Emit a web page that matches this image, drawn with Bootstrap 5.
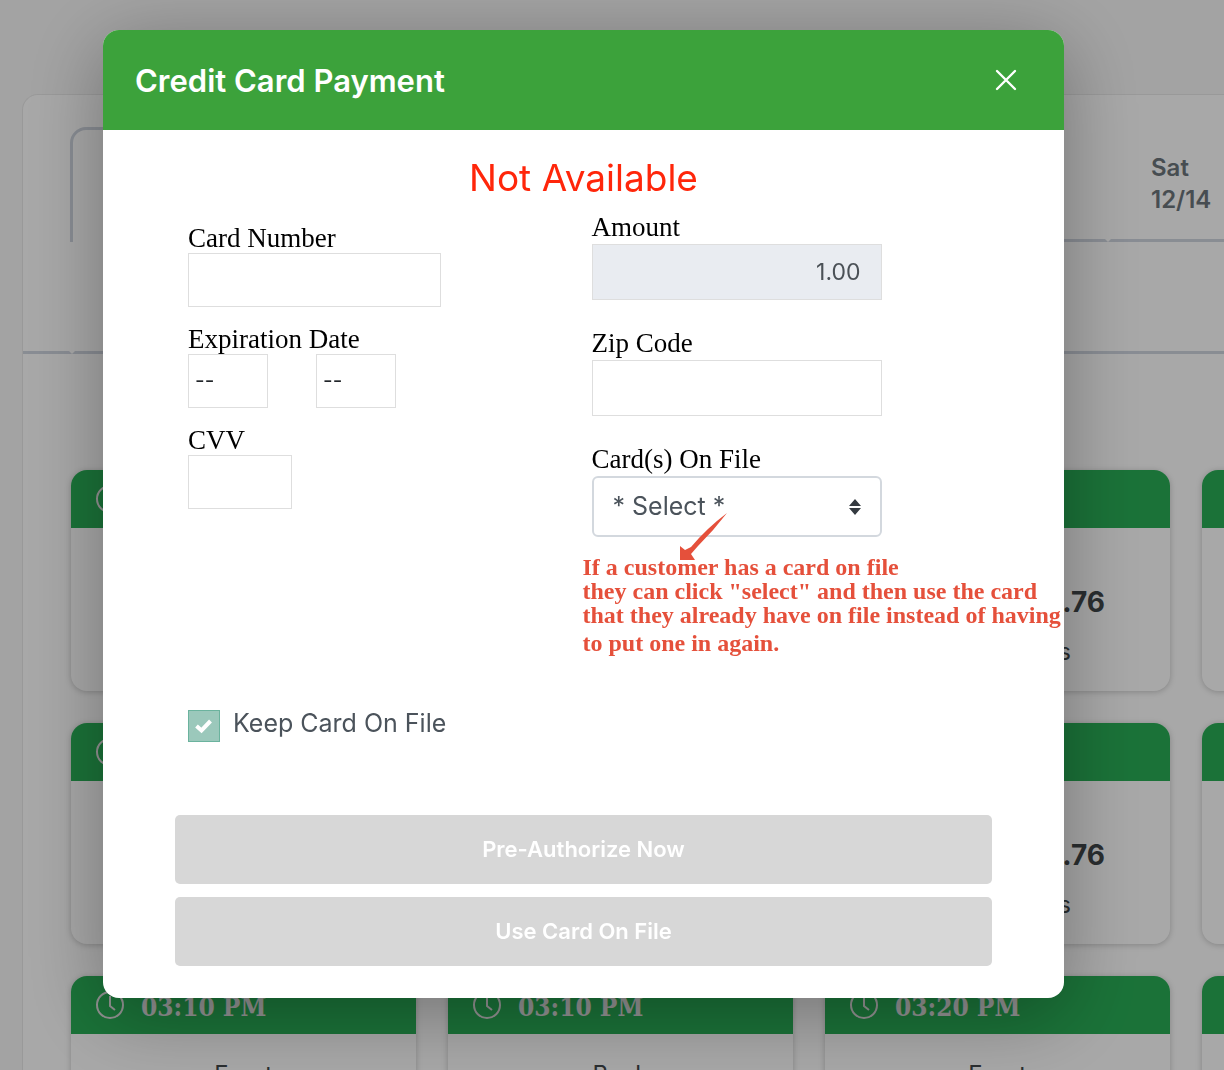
<!DOCTYPE html>
<html lang="en">
<head>
<meta charset="utf-8">
<meta name="viewport" content="width=device-width, initial-scale=1">
<title>Credit Card Payment</title>
<link href="https://cdn.jsdelivr.net/npm/bootstrap@5.3.0/dist/css/bootstrap.min.css" rel="stylesheet">
<style>
  body { background: #f7f7f7; font-family: Inter, sans-serif; color: #404649; overflow: hidden; }

  /* schedule page behind the dialog */
  .schedule { height: 100vh; padding: 94px 0 0 22px; overflow: hidden; }
  .panel { height: 100%; background: #fff; border: 1px solid #e9e9e9; border-width: 1px 0 0 1px; border-top-left-radius: 16px; overflow: hidden; }
  .days { padding: 32px 0 0 47px; height: 147px; }
  .day { flex: 0 0 173px; border: 3px solid transparent; border-bottom-color: #d0d6e0; padding: 22px 40px; font-size: 24px; line-height: 32px; font-weight: 600; color: #6d757c; }
  .day-active { border-color: #d0d6e0 #d0d6e0 transparent #d0d6e0; border-radius: 16px 16px 0 0; border-bottom: 0; }
  .subtabs { height: 112px; }
  .subtab { border: 3px solid transparent; border-bottom-color: #d0d6e0; }
  .subtab-first { flex: 0 0 49px; border-left: 0; }
  .subtab-rest { border-right: 0; }
  .slots { padding: 116px 0 0 48px; gap: 32px; }
  .slot-line { gap: 32px; }
  .slot { flex: 0 0 345px; height: 221px; border-radius: 16px; overflow: hidden; background: #fff; box-shadow: 0 1px 6px rgba(0,0,0,.22); }
  .slot-head { height: 58px; background: #29ae56; color: #e0e0e0; padding: 0 24px; gap: 16px; font: bold 26px/32px "DejaVu Serif Condensed", "DejaVu Serif", serif; }
  .slot-head span { padding-top: 4px; }
  .slot-place { padding-top: 25px; font-size: 24px; line-height: 32px; }
  .price { padding: 56px 65px 0 0; font-size: 28px; line-height: 36px; font-weight: 700; }
  .spots { padding: 16px 99px 0 0; font-size: 24px; line-height: 32px; }

  /* dialog */
  .modal-backdrop.show { opacity: .34; }
  .pay-modal { padding: 30px 160px 0 103px; }
  .pay-modal .modal-dialog { max-width: none; margin: 0; }
  .pay-modal .modal-content { border: 0; border-radius: 16px; box-shadow: 0 16px 80px rgba(0,0,0,.32); overflow: hidden; }
  .pay-head { height: 100px; background: #3ca23b; color: #fff; padding: 2px 46px 0 32px; }
  .pay-title { font-size: 31px; line-height: 40px; font-weight: 600; }
  .pay-body { padding: 24px 72px 32px; }
  .alert-line { font-size: 37px; line-height: 48px; color: #ff260a; }
  .fields-left { padding: 21px 0 0 13px; }
  .fields-right { padding: 9px 0 0 8px; }
  .fields-left label, .fields-right label { display: block; font: 27px/30px "Liberation Serif", serif; color: #000; }
  .fields-right label { line-height: 33px; }
  .fields-left .form-control, .fields-left .form-select { height: 54px; border: 1px solid #dedede; border-radius: 0; padding: 0 6px; margin-bottom: 17px; font-size: 21px; color: #212529; background-image: none; }
  .w-number { width: 253px; }
  .fields-left .w-exp { width: 80px; }
  .fields-left .w-cvv { width: 104px; }
  .exp-pair { gap: 48px; }
  .fields-right .form-control { width: 290px; height: 56px; border: 1px solid #dedede; border-radius: 0; padding: 0 20px; margin-bottom: 27px; font-size: 23px; color: #4b5157; }
  .fields-right .form-control:disabled { background: #e9ecf1; }
  .fields-right .form-select { width: 290px; height: 61px; border: 2px solid #d3d8de; border-radius: 6px; padding: 0 19px; font-size: 25px; color: #4b535b;
    background-image: url("data:image/svg+xml,%3Csvg xmlns='http://www.w3.org/2000/svg' viewBox='0 0 12 16'%3E%3Cpath fill='%23343a40' d='M0 7 6 0l6 7zM0 9h12l-6 7z'/%3E%3C/svg%3E"); background-size: 12px 16px; background-position: right 19px center; }
  .note { margin: 18px 0 0 -9px; font: bold 24px/24px "Liberation Serif", serif; color: #e5503b; }
  .note-arrow { left: 97px; top: -42px; }
  .keep { padding: 50px 0 0 13px; gap: 13px; }
  .keep .form-check-input { flex: none; width: 32px; height: 32px; margin: 5px 0 0; border: 1px solid #6bb39e; border-radius: 0; background-color: #9bc8bb; opacity: 1;
    background-image: url("data:image/svg+xml,%3Csvg xmlns='http://www.w3.org/2000/svg' viewBox='0 0 28 28'%3E%3Cpath fill='none' stroke='%23fff' stroke-width='4' d='M6.500 14 11.500 18.500 20.500 9'/%3E%3C/svg%3E"); background-size: 28px 28px; }
  .keep .form-check-label { font-size: 25px; line-height: 36px; color: #4b535b; }
  .actions { padding-top: 73px; gap: 13px; }
  .actions .btn { height: 69px; border: 0; border-radius: 5px; background: #d7d7d7; color: #fff; opacity: 1; font-size: 22px; font-weight: 600; }
</style>
<script src="https://cdn.jsdelivr.net/npm/bootstrap@5.3.0/dist/js/bootstrap.bundle.min.js"></script>
</head>
<body>
<svg class="d-none" xmlns="http://www.w3.org/2000/svg">
  <symbol id="clock" viewBox="0 0 30 30"><g fill="none" stroke="currentColor" stroke-width="2"><circle cx="15" cy="15" r="13"/><path d="M15 6v10l5 4"/></g></symbol>
</svg>

<main class="schedule">
  <div class="panel">
    <div class="days d-flex">
      <div class="day day-active"></div>
      <div class="day"></div>
      <div class="day"></div>
      <div class="day"></div>
      <div class="day"></div>
      <div class="day"></div>
      <div class="day">Sat 12/14</div>
    </div>
    <div class="subtabs d-flex">
      <div class="subtab subtab-first"></div>
      <div class="subtab subtab-rest flex-grow-1"></div>
    </div>
    <div class="slots d-flex flex-column">
      <div class="slot-line d-flex">
        <div class="slot"><div class="slot-head d-flex align-items-center"><svg width="30" height="30"><use href="#clock"/></svg></div></div>
        <div class="slot"><div class="slot-head"></div></div>
        <div class="slot"><div class="slot-head"></div><div class="price text-end">.76</div><div class="spots text-end">s</div></div>
        <div class="slot"><div class="slot-head"></div></div>
      </div>
      <div class="slot-line d-flex">
        <div class="slot"><div class="slot-head d-flex align-items-center"><svg width="30" height="30"><use href="#clock"/></svg></div></div>
        <div class="slot"><div class="slot-head"></div></div>
        <div class="slot"><div class="slot-head"></div><div class="price text-end">.76</div><div class="spots text-end">s</div></div>
        <div class="slot"><div class="slot-head"></div></div>
      </div>
      <div class="slot-line d-flex">
        <div class="slot"><div class="slot-head d-flex align-items-center"><svg width="30" height="30"><use href="#clock"/></svg><span>03:10 PM</span></div><div class="slot-place text-center">Front</div></div>
        <div class="slot"><div class="slot-head d-flex align-items-center"><svg width="30" height="30"><use href="#clock"/></svg><span>03:10 PM</span></div><div class="slot-place text-center">Back</div></div>
        <div class="slot"><div class="slot-head d-flex align-items-center"><svg width="30" height="30"><use href="#clock"/></svg><span>03:20 PM</span></div><div class="slot-place text-center">Front</div></div>
        <div class="slot"><div class="slot-head"></div></div>
      </div>
    </div>
  </div>
</main>

<div class="modal-backdrop show"></div>
<div class="modal show d-block pay-modal" role="dialog" aria-modal="true" aria-labelledby="payTitle">
  <div class="modal-dialog">
    <div class="modal-content">
      <div class="pay-head d-flex align-items-center justify-content-between">
        <h1 class="pay-title mb-0" id="payTitle">Credit Card Payment</h1>
        <button type="button" class="btn p-0 border-0 text-white d-flex" aria-label="Close">
          <svg width="24" height="24" viewBox="0 0 24 24" fill="none" stroke="currentColor" stroke-width="2.400" stroke-linecap="round"><path d="M3 2l18 18M21 2 3 20"/></svg>
        </button>
      </div>
      <form class="pay-body">
        <div class="alert-line text-center">Not Available</div>
        <div class="row g-0">
          <div class="col-6 fields-left">
            <label for="number">Card Number</label>
            <input class="form-control w-number" id="number" type="text">
            <label for="month">Expiration Date</label>
            <div class="exp-pair d-flex">
              <select class="form-select w-exp" id="month"><option>--</option></select>
              <select class="form-select w-exp" aria-label="Expiration year"><option>--</option></select>
            </div>
            <label for="cvv">CVV</label>
            <input class="form-control w-cvv" id="cvv" type="text">
          </div>
          <div class="col-6 fields-right">
            <label for="amount">Amount</label>
            <input class="form-control text-end" id="amount" type="text" value="1.00" disabled>
            <label for="zip">Zip Code</label>
            <input class="form-control" id="zip" type="text">
            <label for="saved">Card(s) On File</label>
            <select class="form-select" id="saved"><option>* Select *</option></select>
            <div class="note position-relative text-nowrap">
              <svg class="note-arrow position-absolute" width="48" height="47" viewBox="0 0 48 47"><path fill="#e5503b" d="M47 0Q34 17 18 33l-7 8 4 6H0V33l5 4 6-3Q27 15 47 0z"/></svg>
              <div>If a customer has a card on file</div>
              <div>they can click "select" and then use the card</div>
              <div>that they already have on file instead of having</div>
              <div class="pt-1">to put one in again.</div>
            </div>
          </div>
        </div>
        <div class="keep d-flex align-items-start">
          <input class="form-check-input" type="checkbox" id="keep" checked>
          <label class="form-check-label" for="keep">Keep Card On File</label>
        </div>
        <div class="actions d-flex flex-column">
          <button type="button" class="btn" disabled>Pre-Authorize Now</button>
          <button type="button" class="btn" disabled>Use Card On File</button>
        </div>
      </form>
    </div>
  </div>
</div>
</body>
</html>
